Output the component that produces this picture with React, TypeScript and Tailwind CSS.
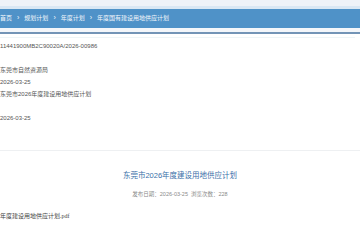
const rows = [
  '11441900MB2C90020A/2026-00986',
  '',
  '东莞市自然资源局',
  '2026-03-25',
  '东莞市2026年度建设用地供应计划',
  '',
  '2026-03-25',
]

const crumbs = ['首页', '规划计划', '年度计划', '年度国有建设用地供应计划']

export default function App() {
  return (
    <div className="h-[240px] w-[360px] overflow-hidden bg-white font-['Liberation_Sans','Noto_Sans_CJK_SC',sans-serif]">
      <div className="h-[6px] bg-[#eef2f8]" />
      <div className="h-[3px] bg-[#d9e7f4]" />
      <nav className="flex h-[19px] items-center bg-[#4f92c8] text-[6px] text-[#f4f8fc]">
        {crumbs.map((c, i) => (
          <span key={c} className="flex items-center">
            {i > 0 && <span className="mx-[5px] text-[7px]">›</span>}
            <span>{c}</span>
          </span>
        ))}
      </nav>
      <div className="h-[4px] bg-[#f3f6fa]" />
      <div className="h-[2px] bg-[#7394b6]" />
      <div className="mt-[3px] mr-[5px] h-px bg-[#eef5f7]" />

      <div className="mt-[2px] flex flex-col text-[6px] text-[#555]">
        {rows.map((r, i) => (
          <div key={i} className="flex h-[12px] items-center">
            {r}
          </div>
        ))}
      </div>

      <div className="mt-[26px] h-px bg-[#eef0f2]" />

      <div className="w-full text-center">
        <h1 className="mt-[20px] text-[7.5px] leading-[9px] text-[#3b6fa8]">
          东莞市2026年度建设用地供应计划
        </h1>
        <p className="mt-[11px] text-[5.5px] leading-[7px] text-[#8a8a8a]">
          发布日期：2026-03-25&nbsp;&nbsp;浏览次数：228
        </p>
      </div>

      <div className="mt-[14px] font-['Liberation_Serif','Noto_Sans_CJK_SC',serif] text-[6px] leading-[8px] text-[#444]">
        年度建设用地供应计划.pdf
      </div>
    </div>
  )
}
